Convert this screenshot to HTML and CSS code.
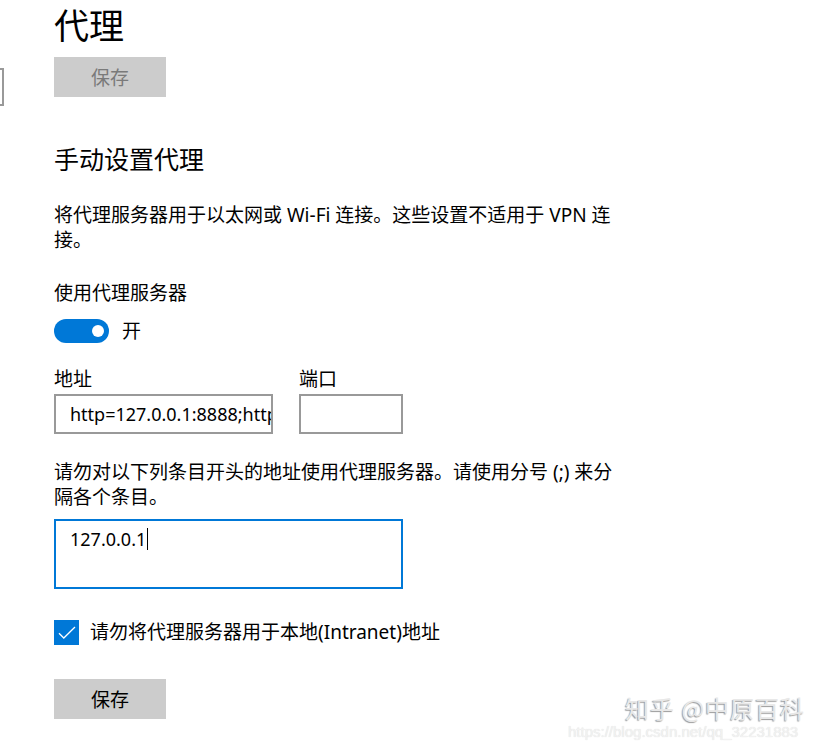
FILE: index.html
```html
<!DOCTYPE html>
<html lang="zh-CN">
<head>
  <meta charset="UTF-8">
  <meta name="viewport" content="width=device-width, initial-scale=1.0">
  <title>代理</title>
  <link rel="stylesheet" href="styles.css">
</head>
<body>

  <div class="window">
    <!-- edge of the nav search box, cut off by the crop -->
    <div class="nav-edge">
      <div class="nav-box"></div>
    </div>

    <div class="settings">
      <h1 class="page-title">代理</h1>
      <button class="btn" disabled>保存</button>

      <h2 class="section-title">手动设置代理</h2>
      <p class="desc">将代理服务器用于以太网或 Wi-Fi 连接。这些设置不适用于 VPN 连接。</p>

      <div class="label">使用代理服务器</div>
      <div class="toggle-row">
        <span class="toggle on"><span class="knob"></span></span>
        <span class="toggle-text">开</span>
      </div>

      <div class="fields">
        <div class="field">
          <label for="address">地址</label>
          <input type="text" id="address" class="input address" value="http=127.0.0.1:8888;https=127.0.0.1:8888" readonly>
        </div>
        <div class="field">
          <label for="port">端口</label>
          <input type="text" id="port" class="input port" value="" readonly>
        </div>
      </div>

      <p class="desc desc-exceptions">请勿对以下列条目开头的地址使用代理服务器。请使用分号 (;) 来分隔各个条目。</p>
      <div class="textarea focused">127.0.0.1<span class="caret"></span></div>

      <div class="check-row">
        <span class="checkbox checked">
          <svg width="18" height="14" viewBox="0 0 18 14"><path d="M1 7.2 L5.8 12 L17 1" fill="none" stroke="#fff" stroke-width="1.3"/></svg>
        </span>
        <span class="check-text">请勿将代理服务器用于本地(Intranet)地址</span>
      </div>

      <button class="btn btn-save">保存</button>
    </div>
  </div>

  <!-- watermarks -->
  <div class="mark-zhihu">知乎 @中原百科</div>
  <div class="mark-csdn">https://blog.csdn.net/qq_32231883</div>

</body>
</html>
```

FILE: styles.css
```css
/* Page */
body, html {
  margin: 0;
  padding: 0;
  background: #fff;
  height: 100%;
  overflow: hidden;
  font-family: "Noto Sans", "Noto Sans CJK SC", sans-serif;
  color: #000;
}

.window {
  display: flex;
}

/* Left nav fragment */
.nav-edge {
  width: 4px;
  flex: 0 0 auto;
}

.nav-box {
  margin-top: 68px;
  height: 34px;
  width: 2px;
  border: 2px solid #999;
  border-left: none;
}

/* Settings column */
.settings {
  margin-left: 50px;
  display: flex;
  flex-direction: column;
  align-items: flex-start;
}

.page-title {
  margin: 0;
  font-size: 35px;
  font-weight: normal;
  line-height: 52px;
}

.btn {
  margin-top: 5px;
  width: 112px;
  height: 40px;
  border: none;
  background-color: #ccc;
  color: #000;
  font-family: inherit;
  font-size: 19px;
  padding: 0;
}

.btn:disabled {
  color: #7a7a7a;
}

.section-title {
  margin: 46px 0 0;
  font-size: 25px;
  font-weight: normal;
  line-height: 32px;
}

.desc {
  margin: 28px 0 0;
  width: 570px;
  font-size: 19px;
  line-height: 25px;
}

.label {
  margin-top: 28px;
  font-size: 19px;
  line-height: 25px;
}

/* Toggle switch */
.toggle-row {
  margin-top: 13px;
  display: flex;
  align-items: center;
  height: 24px;
}

.toggle {
  width: 55px;
  height: 24px;
  border-radius: 12px;
  background-color: #0078d7;
  display: flex;
  align-items: center;
  justify-content: flex-end;
  padding-right: 5px;
  box-sizing: border-box;
}

.knob {
  width: 12px;
  height: 12px;
  border-radius: 50%;
  background-color: #fff;
}

.toggle-text {
  margin-left: 13px;
  font-size: 19px;
  line-height: 25px;
}

/* Address / port */
.fields {
  margin-top: 24px;
  display: flex;
  gap: 26px;
}

.field label {
  display: block;
  font-size: 19px;
  line-height: 25px;
  margin-bottom: 2px;
}

.input {
  display: block;
  height: 40px;
  border: 2px solid #999;
  box-sizing: border-box;
  padding: 0 0 0 14px;
  font-family: inherit;
  font-size: 18px;
  color: #000;
  background: #fff;
  outline: none;
}

.address {
  width: 219px;
}

.port {
  width: 104px;
}

.desc-exceptions {
  margin-top: 26px;
}

/* Exceptions box (focused) */
.textarea {
  margin-top: 9px;
  width: 349px;
  height: 70px;
  border: 2px solid #0078d7;
  box-sizing: border-box;
  padding: 6px 14px;
  font-size: 18px;
  line-height: 25px;
}

.caret {
  display: inline-block;
  width: 1px;
  height: 22px;
  margin-left: 1px;
  background-color: #000;
  vertical-align: -4px;
}

/* Checkbox */
.check-row {
  margin-top: 31px;
  display: flex;
  align-items: center;
}

.checkbox {
  width: 25px;
  height: 25px;
  background-color: #0078d7;
  display: flex;
  align-items: center;
  justify-content: center;
}

.check-text {
  margin-left: 11px;
  font-size: 19px;
  line-height: 25px;
}

.btn-save {
  margin-top: 34px;
}

/* Watermarks */
.mark-zhihu {
  position: absolute;
  left: 625px;
  top: 695px;
  font-family: "Noto Sans CJK SC", sans-serif;
  font-size: 24px;
  line-height: 26px;
  color: #e8e8e8;
  text-shadow: -1px 1px 1px #9a9a9a;
  letter-spacing: 1px;
}

.mark-csdn {
  position: absolute;
  left: 568px;
  top: 724px;
  font-family: "Liberation Sans", sans-serif;
  font-size: 15px;
  line-height: 16px;
  color: #f2f2f2;
  text-shadow: 0 0 1px #d8d8d8;
}
```
